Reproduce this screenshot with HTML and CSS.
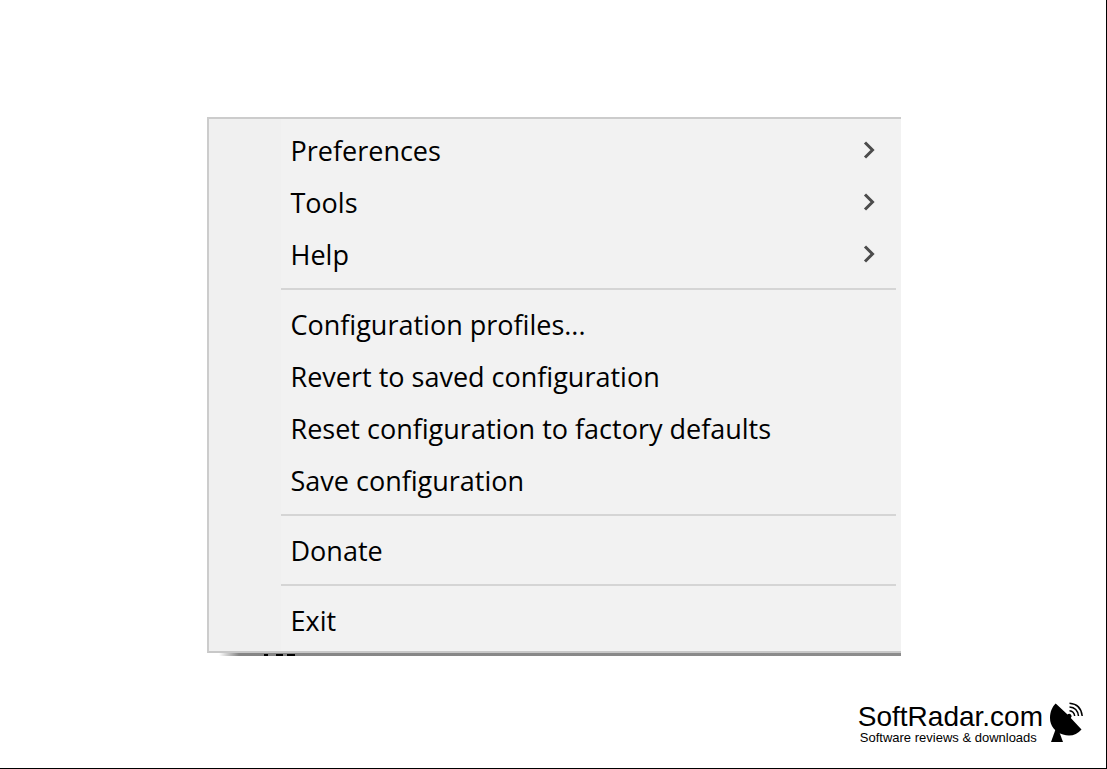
FILE: index.html
```html
<!DOCTYPE html>
<html lang="en">
<head>
    <meta charset="UTF-8">
    <meta name="viewport" content="width=device-width, initial-scale=1.0">
    <title>Configuration menu - SoftRadar.com</title>
    <link rel="stylesheet" href="styles.css">
</head>
<body>
    <main>
        <div class="menu-wrap">
            <ul class="menu">
                <li><button type="button">Preferences <svg class="arrow" viewBox="0 0 12 18"><path d="M2 1.500L9.500 9L2 16.500"/></svg></button></li>
                <li><button type="button">Tools <svg class="arrow" viewBox="0 0 12 18"><path d="M2 1.500L9.500 9L2 16.500"/></svg></button></li>
                <li><button type="button">Help <svg class="arrow" viewBox="0 0 12 18"><path d="M2 1.500L9.500 9L2 16.500"/></svg></button></li>
                <li class="separator"><hr></li>
                <li><button type="button">Configuration profiles...</button></li>
                <li><button type="button">Revert to saved configuration</button></li>
                <li><button type="button">Reset configuration to factory defaults</button></li>
                <li><button type="button">Save configuration</button></li>
                <li class="separator"><hr></li>
                <li><button type="button">Donate</button></li>
                <li class="separator"><hr></li>
                <li><button type="button">Exit</button></li>
            </ul>
            <div class="shadow">
                <svg class="marks" viewBox="0 0 34 3"><path d="M1 1h4v2H1zM13 1h7v2h-7zM24 1h8v2h-8z"/></svg>
            </div>
        </div>
    </main>

    <footer>
        <a class="logo" href="#">
            <span class="logo-text">
                <span class="name">SoftRadar.com</span>
                <span class="tagline">Software reviews &amp; downloads</span>
            </span>
            <svg class="dish" viewBox="0 0 34 42">
                <path d="M6.700 1.500L18.500 12.500A2.200 2.200 0 0 1 21.800 16L32.500 27.500C28 33 21 35 14 32.500C6 30 1 24 1 16C1 9.500 3.500 4.500 6.700 1.500Z"/>
                <path d="M6.500 27.500L10.500 30.500L14 40H2Z"/>
                <path class="wave" d="M20.500 8.700Q25 9 25.700 14M20.500 5Q28.500 5.500 29.500 14M20.500 1.200Q32 2 33.200 14"/>
            </svg>
        </a>
    </footer>
</body>
</html>
```
FILE: styles.css
```css
* {
    box-sizing: border-box;
}
body {
    display: flex;
    flex-direction: column;
    min-height: 100vh;
    margin: 0;
    background: white;
    box-shadow: inset -1px -1px 0 #000;
    color: #000;
}
main {
    padding-top: 117px;
}
.menu-wrap {
    width: 100%;
    max-width: 694px;
    margin: 0 auto;
}
.menu {
    list-style: none;
    margin: 0;
    padding: 5px 0;
    background: linear-gradient(to right, #f0f0f0 72px, #f2f2f2 72px);
    border: 2px solid #ccc;
    border-right: none;
    border-bottom-color: #c8c8c8;
}
.menu button {
    display: flex;
    align-items: center;
    justify-content: space-between;
    width: 100%;
    height: 52px;
    padding: 0 26px 0 82px;
    background: none;
    border: none;
    color: #000;
    font-family: "Open Sans", "Noto Sans", sans-serif;
    font-size: 27px;
    text-align: left;
}
.menu button:hover {
    background: #91c9f7;
}
.arrow {
    width: 12px;
    height: 18px;
    fill: none;
    stroke: #4c4c4c;
    stroke-width: 3;
}
.separator {
    padding: 8px 5px 8px 72px;
}
.separator hr {
    height: 2px;
    margin: 0;
    border: none;
    background: #d5d5d5;
}
.shadow {
    display: flex;
    height: 3px;
    margin-left: 12px;
    padding-left: 44px;
    background: linear-gradient(to right, transparent, #858585 20px, #8c8c8c);
}
.marks {
    width: 34px;
    height: 3px;
}
footer {
    display: flex;
    justify-content: flex-end;
    margin-top: auto;
    padding: 24px 24px 25px;
}
.logo {
    display: flex;
    align-items: center;
    gap: 6px;
    color: #000;
    font-family: "Liberation Sans", Arial, sans-serif;
    text-decoration: none;
}
.logo-text {
    display: flex;
    flex-direction: column;
}
.name {
    font-size: 28px;
    line-height: 28px;
}
.tagline {
    padding-left: 2px;
    font-size: 13px;
    line-height: 13px;
}
.dish {
    width: 34px;
    height: 42px;
}
.wave {
    fill: none;
    stroke: #000;
    stroke-width: 1.5;
}
```
